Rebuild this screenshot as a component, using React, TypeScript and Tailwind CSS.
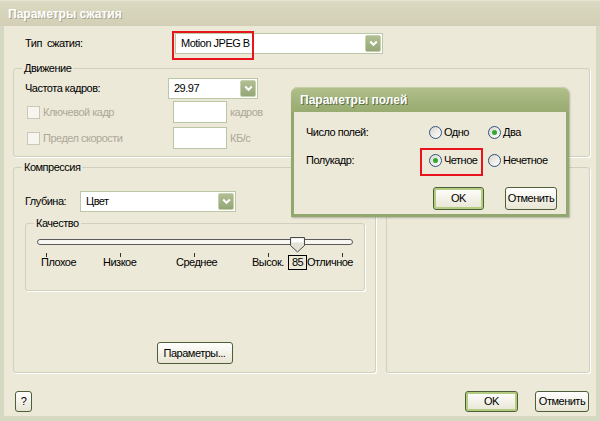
import type { ReactNode } from "react"

function Chevron() {
  return (
    <svg width="9" height="7" viewBox="0 0 9 7">
      <path d="M1.2 1.5 L4.5 4.8 L7.8 1.5" fill="none" stroke="#fff" strokeWidth="2" />
    </svg>
  )
}

function Combo({ value, className }: { value: string; className: string }) {
  return (
    <div className={`flex h-[21px] items-stretch border border-[#bcc7a8] bg-white p-px ${className}`}>
      <span className="flex flex-1 items-center pl-[4px] text-black">{value}</span>
      <span className="flex w-[16px] items-center justify-center rounded-[2px] border border-[#c5d0ae] bg-gradient-to-b from-[#b1bf93] to-[#94a676]">
        <Chevron />
      </span>
    </div>
  )
}

function Group({ title, className, children }: { title?: string; className: string; children?: ReactNode }) {
  return (
    <div className={`rounded-[3px] border border-[#d0d0bf] shadow-[1px_1px_0_#fff] ${className}`}>
      {title && <div className="-mt-[7px] ml-[8px] w-fit bg-[#ece9d8] px-[2px] leading-[13px] text-black">{title}</div>}
      {children}
    </div>
  )
}

function Btn({ children, def, className }: { children: ReactNode; def?: boolean; className: string }) {
  return (
    <button
      className={`flex items-center justify-center rounded-[3px] border border-[#4d5f36] bg-gradient-to-b from-white to-[#e8e5d3] leading-none text-black ${
        def ? "shadow-[inset_0_0_0_2px_#b3cc80]" : ""
      } ${className}`}
    >
      {children}
    </button>
  )
}

function Radio({ checked }: { checked?: boolean }) {
  return (
    <span className="flex h-[13px] w-[13px] items-center justify-center rounded-full border border-[#2c5482] bg-gradient-to-br from-[#d9d7cc] to-white">
      {checked && <span className="h-[5px] w-[5px] rounded-full bg-[#30a830]" />}
    </span>
  )
}

function Check() {
  return <span className="h-[13px] w-[13px] border border-[#cac8bb] bg-[#f6f5ee]" />
}

function Slider() {
  const ticks = [10, 84, 158, 232, 306]
  return (
    <svg width="320" height="22" viewBox="0 0 320 22" className="ml-[10px] mt-[6px] block">
      <rect x="1.5" y="3.5" width="315" height="5" rx="2.5" fill="#f7f6f1" stroke="#5a5a5a" />
      {ticks.map((x) => (
        <line key={x} x1={x + 0.5} y1="17" x2={x + 0.5} y2="21" stroke="#333" />
      ))}
      <path d="M254.5 1.5 H268.5 V9.5 L261.5 16 L254.5 9.5 Z" fill="#e4e2d6" stroke="#4a4a4a" />
      <path d="M255.5 2.5 H267.5 V6.5 H255.5 Z" fill="#fff" />
    </svg>
  )
}

export default function App() {
  return (
    <div className="relative flex h-[421px] w-[600px] flex-col overflow-hidden bg-[#ece9d8] font-['Liberation_Sans',Arial,sans-serif] text-[11px] tracking-[-0.5px] text-black">
      {/* title bar */}
      <div className="flex h-[26px] items-center border-t border-[#e6e4d4] bg-gradient-to-b from-[#dcd9c2] to-[#d2cfb6] pl-[8px] text-[12px] font-bold tracking-normal text-white [text-shadow:1px_1px_0_#a9a68f]">
        Параметры сжатия
      </div>

      <div className="flex flex-1 flex-col border-x-[4px] border-b-[5px] border-[#d5d9c1] pl-[9px] pr-[6px]">
        {/* codec */}
        <div className="mt-[7px] flex h-[21px] items-center">
          <span className="w-[162px] pl-[12px]">Тип&nbsp; сжатия:</span>
          <div className="relative">
            <Combo value="Motion JPEG B" className="w-[208px]" />
            <div className="absolute -left-[3px] -top-[2px] h-[29px] w-[82px] border-2 border-[#e8141c]" />
          </div>
        </div>

        {/* motion */}
        <Group title="Движение" className="mt-[14px] h-[89px]">
          <div className="mt-[3px] flex h-[21px] items-center">
            <span className="w-[154px] pl-[11px]">Частота кадров:</span>
            <Combo value="29.97" className="w-[90px]" />
          </div>
          <div className="mt-[2px] flex h-[22px] items-center">
            <span className="flex w-[159px] items-center gap-[3px] pl-[13px] text-[#aca899]">
              <Check />
              Ключевой кадр
            </span>
            <span className="h-[22px] w-[54px] border border-[#b9c5a6] bg-white" />
            <span className="ml-[3px] text-[#aca899]">кадров</span>
          </div>
          <div className="mt-[4px] flex h-[22px] items-center">
            <span className="flex w-[159px] items-center gap-[3px] pl-[13px] text-[#aca899]">
              <Check />
              Предел скорости
            </span>
            <span className="h-[22px] w-[54px] border border-[#b9c5a6] bg-white" />
            <span className="ml-[3px] text-[#aca899]">КБ/с</span>
          </div>
        </Group>

        <div className="mt-[10px] flex h-[206px] gap-[10px]">
          {/* compression */}
          <Group title="Компрессия" className="flex w-[363px] flex-col pb-[8px]">
            <div className="mt-[17px] flex h-[21px] items-center">
              <span className="w-[66px] pl-[11px]">Глубина:</span>
              <Combo value="Цвет" className="w-[156px]" />
            </div>
            <Group title="Качество" className="ml-[11px] mt-[11px] h-[68px] w-[340px]">
              <Slider />
              <div className="-mt-[3px] flex h-[15px] items-center pl-[15px]">
                <span className="w-[62px]">Плохое</span>
                <span className="w-[73px]">Низкое</span>
                <span className="w-[76px]">Среднее</span>
                <span className="w-[36px]">Высок.</span>
                <span className="flex h-[15px] w-[19px] items-center justify-center border border-black bg-[#ece9d8]">85</span>
                <span>Отличное</span>
              </div>
            </Group>
            <Btn className="mt-auto h-[22px] w-[76px] self-center">Параметры...</Btn>
          </Group>

          <Group className="flex-1" />
        </div>

        {/* bottom buttons */}
        <div className="mt-[18px] flex items-center justify-between pr-[1px]">
          <Btn className="ml-[2px] h-[21px] w-[17px] text-[#3d6bd0]">?</Btn>
          <div className="flex gap-[17px]">
            <Btn def className="h-[21px] w-[53px]">OK</Btn>
            <Btn className="h-[21px] w-[54px]">Отменить</Btn>
          </div>
        </div>
      </div>

      {/* field parameters dialog */}
      <div className="absolute left-[291px] top-[87px] flex h-[130px] w-[278px] flex-col rounded-t-[7px] border-x-[3px] border-b-[3px] border-[#93a86e] bg-[#ece9d8] shadow-[1px_1px_2px_rgba(0,0,0,0.25)]">
        <div className="-mx-[3px] flex h-[25px] items-center rounded-t-[7px] border-t border-[#c6d1aa] bg-gradient-to-b from-[#b2c08c] via-[#a3b47c] to-[#98ab70] pl-[9px] text-[12px] font-bold tracking-normal text-white [text-shadow:1px_1px_0_#5f6f45]">
          Параметры полей
        </div>
        <div className="mt-[12px] flex h-[16px] items-center">
          <span className="w-[135px] pl-[12px]">Число полей:</span>
          <span className="flex w-[59px] items-center gap-[2px]">
            <Radio />
            Одно
          </span>
          <span className="flex items-center gap-[2px]">
            <Radio checked />
            Два
          </span>
        </div>
        <div className="mt-[12px] flex h-[16px] items-center">
          <span className="w-[135px] pl-[12px]">Полукадр:</span>
          <span className="relative flex w-[59px] items-center gap-[2px]">
            <Radio checked />
            Четное
            <span className="absolute -left-[9px] -top-[4px] h-[28px] w-[63px] border-2 border-[#e8141c]" />
          </span>
          <span className="flex items-center gap-[2px]">
            <Radio />
            Нечетное
          </span>
        </div>
        <div className="mt-[19px] flex justify-end gap-[21px] pr-[9px]">
          <Btn def className="h-[23px] w-[51px]">OK</Btn>
          <Btn className="h-[23px] w-[52px]">Отменить</Btn>
        </div>
      </div>
    </div>
  )
}
